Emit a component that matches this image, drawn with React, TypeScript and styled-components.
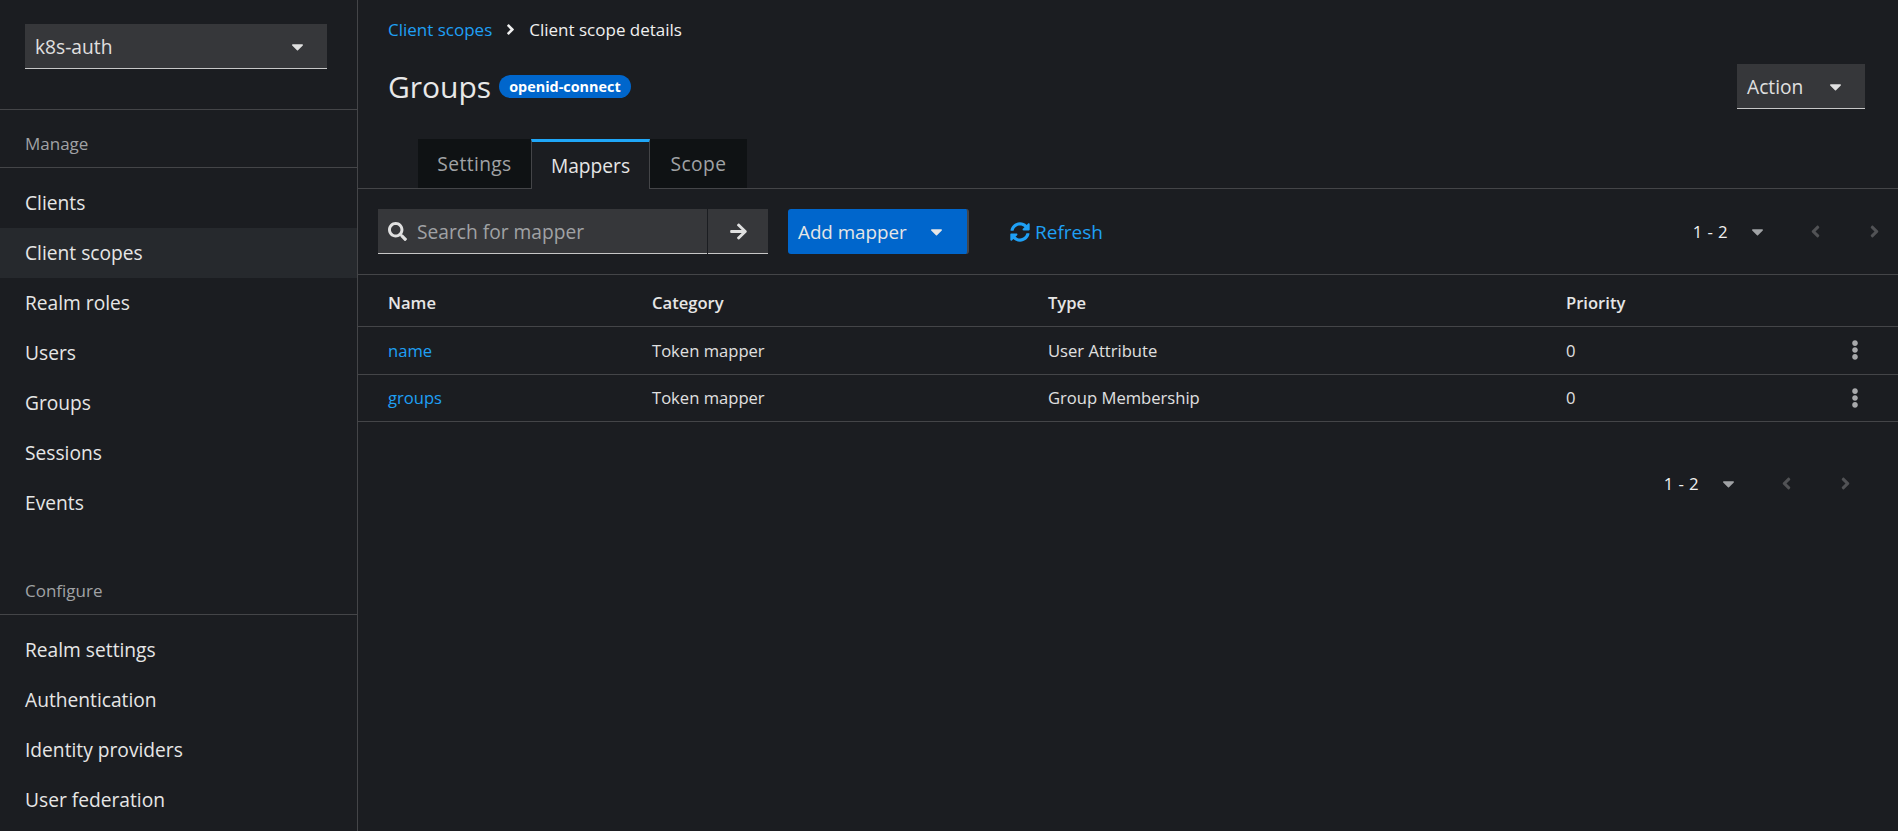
import styled, { createGlobalStyle } from "styled-components";
import {
    FaAngleLeft,
    FaAngleRight,
    FaArrowRight,
    FaCaretDown,
    FaEllipsisV,
    FaSearch,
    FaSyncAlt,
} from "react-icons/fa";

const GlobalStyle = createGlobalStyle`
    html, body {
        margin: 0;
        height: 100%;
        overflow: hidden;
        background: #1b1d21;
    }
    body {
        color: #e0e0e0;
        font-family: "Open Sans", "Liberation Sans", sans-serif;
    }
`;

const Page = styled.div`
    display: grid;
    grid-template-columns: 358px 1fr;
    height: 831px;
    overflow: hidden;
`;

const Sidebar = styled.nav`
    border-right: 1px solid #444548;
    overflow: hidden;
`;

const RealmArea = styled.div`
    padding: 24px 30px 40px 25px;
    border-bottom: 1px solid #444548;
`;

const Select = styled.div<{ $width?: number }>`
    display: flex;
    align-items: center;
    justify-content: space-between;
    box-sizing: border-box;
    width: ${(p) => (p.$width ? `${p.$width}px` : "100%")};
    height: 45px;
    padding: 0 20px 0 10px;
    background: #36373a;
    border-bottom: 1px solid #c7c7c7;
    font-size: 19.2px;
    color: #e0e0e0;
    svg {
        font-size: 19px;
    }
`;

const Section = styled.div<{ $top: number }>`
    padding-top: ${(p) => p.$top}px;
`;

const SectionTitle = styled.div`
    box-sizing: border-box;
    height: 34px;
    padding: 0 25px;
    line-height: 20px;
    font-size: 17px;
    color: #a0a2a5;
    border-bottom: 1px solid #444548;
`;

const NavList = styled.div`
    padding-top: 10px;
`;

const NavItem = styled.div<{ $active?: boolean }>`
    height: 50px;
    padding: 0 25px;
    line-height: 50px;
    font-size: 19.2px;
    color: #e6e6e6;
    background: ${(p) => (p.$active ? "#26292d" : "transparent")};
`;

const Main = styled.main`
    min-width: 0;
`;

const PageHeader = styled.div`
    padding: 18px 33px 0 30px;
`;

const Breadcrumb = styled.div`
    display: flex;
    align-items: center;
    height: 22px;
    font-size: 17px;
    color: #f0f0f0;
`;

const Link = styled.span`
    color: #1fa0f5;
`;

const Crumb = styled.span`
    display: flex;
    margin: 0 10px;
    font-size: 17px;
`;

const TitleRow = styled.div`
    display: flex;
    align-items: center;
    justify-content: space-between;
    height: 45px;
    margin-top: 24px;
`;

const TitleGroup = styled.div`
    display: flex;
    align-items: center;
`;

const Title = styled.h1`
    margin: 0;
    font-size: 30px;
    font-weight: 400;
    color: #e8e8e8;
`;

const Badge = styled.span`
    margin-left: 8px;
    padding: 0 10px;
    height: 23px;
    line-height: 23px;
    border-radius: 12px;
    background: #0066cc;
    color: #fff;
    font-size: 14.4px;
    font-weight: 700;
`;

const Tabs = styled.div`
    display: flex;
    height: 49px;
    margin-top: 30px;
    padding-left: 60px;
    border-bottom: 1px solid #444548;
`;

const Tab = styled.div<{ $active?: boolean; $width: number }>`
    box-sizing: border-box;
    width: ${(p) => p.$width}px;
    height: ${(p) => (p.$active ? "50px" : "49px")};
    text-align: center;
    line-height: ${(p) => (p.$active ? "47px" : "49px")};
    font-size: 19.2px;
    letter-spacing: ${(p) => (p.$active ? "0" : "0.4px")};
    color: ${(p) => (p.$active ? "#e6e6e6" : "#a0a2a5")};
    background: ${(p) => (p.$active ? "#1b1d21" : "#0f1214")};
    border-top: ${(p) => (p.$active ? "3px solid #1fa7f8" : "none")};
    border-left: ${(p) => (p.$active ? "1px solid #444548" : "none")};
    border-right: ${(p) => (p.$active ? "1px solid #444548" : "none")};
`;

const Toolbar = styled.div`
    display: flex;
    align-items: center;
    height: 85px;
    padding: 0 0 0 20px;
    border-bottom: 1px solid #444548;
`;

const SearchBox = styled.div`
    display: flex;
    align-items: center;
    box-sizing: border-box;
    width: 329px;
    height: 45px;
    padding-left: 10px;
    background: #36373a;
    border-bottom: 1px solid #c7c7c7;
    font-size: 19.2px;
    color: #a0a2a5;
    svg {
        margin-right: 10px;
        color: #e0e0e0;
        font-size: 19px;
    }
`;

const ArrowButton = styled.div`
    display: flex;
    align-items: center;
    justify-content: center;
    box-sizing: border-box;
    width: 60px;
    height: 45px;
    margin-left: 1px;
    background: #36373a;
    border-bottom: 1px solid #c7c7c7;
    font-size: 19px;
    color: #e0e0e0;
`;

const PrimaryButton = styled.div`
    display: flex;
    align-items: center;
    box-sizing: border-box;
    width: 181px;
    height: 45px;
    margin-left: 20px;
    padding-left: 10px;
    border-radius: 3px;
    background: #0066cc;
    border-right: 2px solid #444548;
    font-size: 18.8px;
    color: #e6e6e6;
    svg {
        margin-left: 20px;
        font-size: 19px;
    }
`;

const RefreshButton = styled.div`
    display: flex;
    align-items: center;
    margin-left: 41px;
    font-size: 19px;
    color: #1fa0f5;
    svg {
        margin-right: 5px;
        font-size: 20px;
    }
`;

const Pagination = styled.div<{ $right: number }>`
    display: flex;
    align-items: center;
    margin-left: auto;
    margin-right: ${(p) => p.$right}px;
    font-size: 16.8px;
    font-weight: 500;
    color: #f0f0f0;
`;

const PageCount = styled.span`
    letter-spacing: 0.4px;
`;

const PageCaret = styled.span`
    display: flex;
    margin-left: 20px;
    margin-right: 39px;
    font-size: 19px;
    color: #a0a2a5;
`;

const PageArrow = styled.span<{ $gap?: number }>`
    display: flex;
    margin-left: ${(p) => p.$gap ?? 0}px;
    font-size: 19px;
    color: #515255;
`;

const Row = styled.div<{ $head?: boolean }>`
    display: grid;
    grid-template-columns: 264px 396px 518px 1fr 53px;
    align-items: center;
    box-sizing: border-box;
    height: ${(p) => (p.$head ? "52px" : "47.5px")};
    padding: ${(p) => (p.$head ? "4px" : "0")} 0 0 30px;
    border-bottom: 1px solid #444548;
    font-size: 16.6px;
    font-weight: ${(p) => (p.$head ? 600 : 400)};
    color: ${(p) => (p.$head ? "#e6e6e6" : "#e0e0e0")};
`;

const Kebab = styled.span`
    display: flex;
    color: #a8a9ab;
    font-size: 20px;
`;

const BottomBar = styled.div`
    display: flex;
    align-items: center;
    height: 123px;
`;

function Pager({ right }: { right: number }) {
    return (
        <Pagination $right={right}>
            <PageCount>1 - 2</PageCount>
            <PageCaret>
                <FaCaretDown />
            </PageCaret>
            <PageArrow>
                <FaAngleLeft />
            </PageArrow>
            <PageArrow $gap={40}>
                <FaAngleRight />
            </PageArrow>
        </Pagination>
    );
}

const manageItems = ["Clients", "Client scopes", "Realm roles", "Users", "Groups", "Sessions", "Events"];
const configureItems = ["Realm settings", "Authentication", "Identity providers", "User federation"];
const mappers = [
    { name: "name", category: "Token mapper", type: "User Attribute", priority: 0 },
    { name: "groups", category: "Token mapper", type: "Group Membership", priority: 0 },
];

export default function App() {
    return (
        <>
            <GlobalStyle />
            <Page>
                <Sidebar>
                    <RealmArea>
                        <Select>
                            k8s-auth
                            <FaCaretDown />
                        </Select>
                    </RealmArea>
                    <Section $top={24}>
                        <SectionTitle>Manage</SectionTitle>
                        <NavList>
                            {manageItems.map((item) => (
                                <NavItem key={item} $active={item === "Client scopes"}>
                                    {item}
                                </NavItem>
                            ))}
                        </NavList>
                    </Section>
                    <Section $top={53}>
                        <SectionTitle>Configure</SectionTitle>
                        <NavList>
                            {configureItems.map((item) => (
                                <NavItem key={item}>{item}</NavItem>
                            ))}
                        </NavList>
                    </Section>
                </Sidebar>
                <Main>
                    <PageHeader>
                        <Breadcrumb>
                            <Link>Client scopes</Link>
                            <Crumb>
                                <FaAngleRight />
                            </Crumb>
                            Client scope details
                        </Breadcrumb>
                        <TitleRow>
                            <TitleGroup>
                                <Title>Groups</Title>
                                <Badge>openid-connect</Badge>
                            </TitleGroup>
                            <Select $width={128}>
                                Action
                                <FaCaretDown />
                            </Select>
                        </TitleRow>
                    </PageHeader>
                    <Tabs>
                        <Tab $width={113}>Settings</Tab>
                        <Tab $width={119} $active>
                            Mappers
                        </Tab>
                        <Tab $width={97}>Scope</Tab>
                    </Tabs>
                    <Toolbar>
                        <SearchBox>
                            <FaSearch />
                            Search for mapper
                        </SearchBox>
                        <ArrowButton>
                            <FaArrowRight />
                        </ArrowButton>
                        <PrimaryButton>
                            Add mapper
                            <FaCaretDown />
                        </PrimaryButton>
                        <RefreshButton>
                            <FaSyncAlt />
                            Refresh
                        </RefreshButton>
                        <Pager right={14} />
                    </Toolbar>
                    <Row $head>
                        <span>Name</span>
                        <span>Category</span>
                        <span>Type</span>
                        <span>Priority</span>
                    </Row>
                    {mappers.map((m) => (
                        <Row key={m.name}>
                            <Link>{m.name}</Link>
                            <span>{m.category}</span>
                            <span>{m.type}</span>
                            <span>{m.priority}</span>
                            <Kebab>
                                <FaEllipsisV />
                            </Kebab>
                        </Row>
                    ))}
                    <BottomBar>
                        <Pager right={43} />
                    </BottomBar>
                </Main>
            </Page>
        </>
    );
}
